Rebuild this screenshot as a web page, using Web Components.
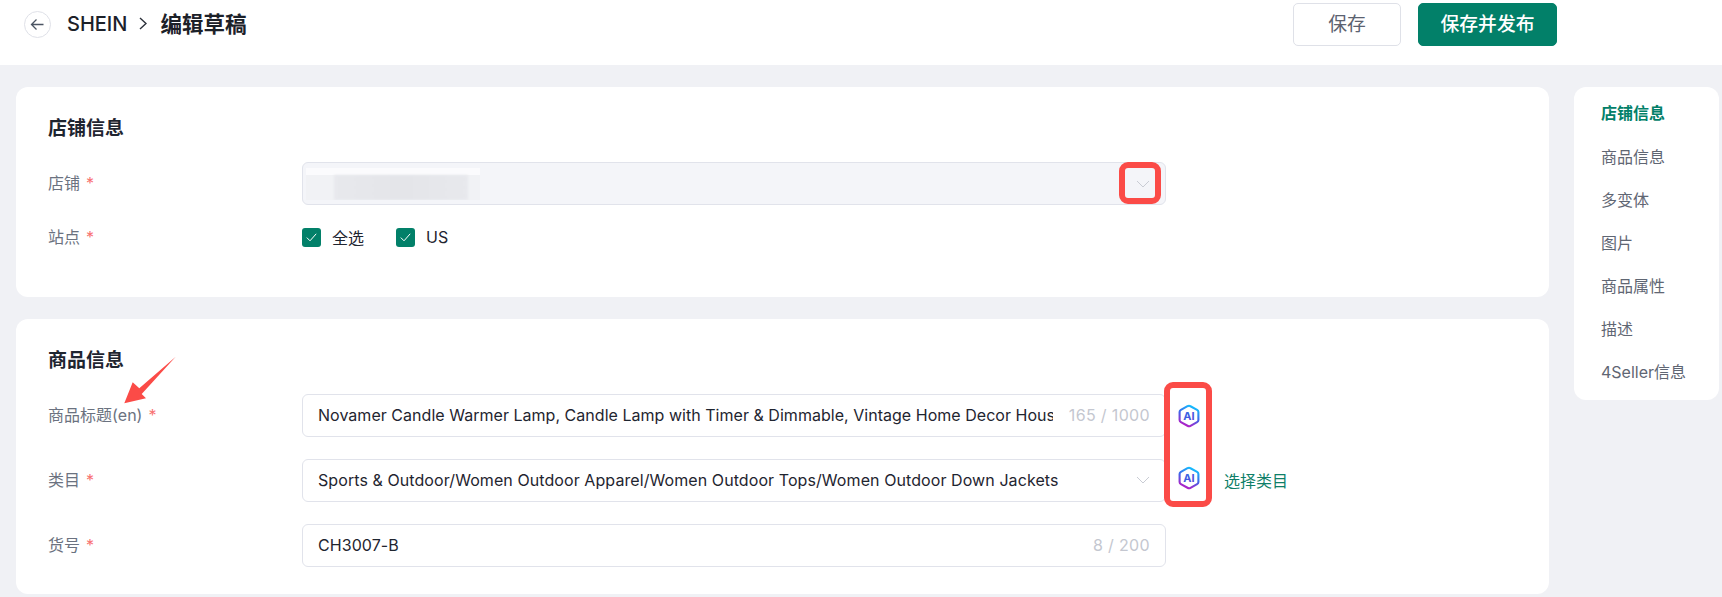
<!DOCTYPE html>
<html lang="zh">
<head>
<meta charset="utf-8">
<title>SHEIN 编辑草稿</title>
<style>
    html, body {
        margin: 0;
        height: 597px;
        overflow: hidden;
        background: #f0f1f5;
        font-family: Inter, "Noto Sans CJK SC", sans-serif;
        font-size: 16px;
        color: #1f2530;
    }
</style>
</head>
<body>

<app-page>
    <top-bar slot="top">
        <span slot="brand">SHEIN</span>
        <span slot="title">编辑草稿</span>
        <app-button slot="actions">保存</app-button>
        <app-button slot="actions" primary>保存并发布</app-button>
    </top-bar>

    <form-card heading="店铺信息">
        <form-row label="店铺">
            <text-field disabled chevron><blur-block></blur-block></text-field>
        </form-row>
        <form-row label="站点" compact>
            <check-box>全选</check-box>
            <check-box>US</check-box>
        </form-row>
    </form-card>

    <form-card heading="商品信息">
        <form-row label="商品标题(en)">
            <text-field counter="165 / 1000" style="letter-spacing:.03px">Novamer Candle Warmer Lamp, Candle Lamp with Timer &amp; Dimmable, Vintage Home Decor Hous</text-field>
            <ai-badge slot="extra"></ai-badge>
        </form-row>
        <form-row label="类目">
            <text-field chevron>Sports &amp; Outdoor/Women Outdoor Apparel/Women Outdoor Tops/Women Outdoor Down Jackets</text-field>
            <ai-badge slot="extra" style="margin-top:-5px"></ai-badge>
            <a slot="extra" style="color:#0f7f69;text-decoration:none;margin:-2px 0 0 24px">选择类目</a>
        </form-row>
        <form-row label="货号">
            <text-field counter="8 / 200">CH3007-B</text-field>
        </form-row>
    </form-card>

    <side-nav slot="side">
        <nav-item active>店铺信息</nav-item>
        <nav-item>商品信息</nav-item>
        <nav-item>多变体</nav-item>
        <nav-item>图片</nav-item>
        <nav-item>商品属性</nav-item>
        <nav-item>描述</nav-item>
        <nav-item>4Seller信息</nav-item>
    </side-nav>

    <!-- annotations drawn over the screenshot -->
    <mark-box slot="over" style="left:1119px;top:162px;width:42px;height:42px"></mark-box>
    <mark-box slot="over" style="left:1164px;top:382px;width:48px;height:125px"></mark-box>
    <mark-arrow slot="over" style="left:120px;top:352px"></mark-arrow>
</app-page>

<script>
function define(name, html, setup) {
    const template = document.createElement('template')
    template.innerHTML = html
    customElements.define(name, class extends HTMLElement {
        connectedCallback() {
            const shadow = this.attachShadow({ mode: "open" })
            shadow.appendChild(template.content.cloneNode(true))
            if (setup) setup(this, shadow)
        }
    })
}

const CHEVRON = `<svg width="14" height="8" viewBox="0 0 14 8" fill="none" stroke="#c9ccd4" stroke-width="1"><path d="M1 1l6 6 6-6"/></svg>`

define('app-page', `
    <style>
        :host { display: block; position: relative; width: 1722px; height: 597px; overflow: hidden; }
        main { display: flex; align-items: flex-start; gap: 25px; padding: 22px 3px 0 16px; }
        .cards { display: flex; flex-direction: column; gap: 22px; flex: 1; min-width: 0; }
    </style>
    <slot name="top"></slot>
    <main>
        <div class="cards"><slot></slot></div>
        <slot name="side"></slot>
    </main>
    <slot name="over"></slot>
`)

define('top-bar', `
    <style>
        :host {
            display: flex;
            align-items: center;
            box-sizing: border-box;
            height: 65px;
            padding: 0 165px 16px 24px;
            background: #fff;
        }
        .back {
            box-sizing: border-box;
            width: 27px;
            height: 27px;
            border: 1px solid #dfe1e8;
            border-radius: 50%;
            display: flex;
            align-items: center;
            justify-content: center;
            margin-right: 16px;
        }
        .title { display: flex; align-items: center; font-size: 20px; font-weight: 550; color: #1c2129; line-height: 28px; padding-bottom: 2px; }
        .title svg { margin: 0 13px 0 12px; }
        .title slot[name=title] { font-size: 21.5px; font-weight: 600; }
        .actions { margin-left: auto; display: flex; gap: 17px; }
    </style>
    <div class="back">
        <svg width="15" height="13" viewBox="0 0 15 13" fill="none" stroke="#4b5563" stroke-width="1.3"><path d="M13.5 6.5H1.5M6.5 1.5l-5 5 5 5"/></svg>
    </div>
    <div class="title">
        <slot name="brand"></slot>
        <svg width="8" height="13" viewBox="0 0 8 13" fill="none" stroke="#2b303a" stroke-width="1.4"><path d="M1 1l6 5.500-6 5.500"/></svg>
        <slot name="title"></slot>
    </div>
    <div class="actions"><slot name="actions"></slot></div>
`)

define('app-button', `
    <style>
        :host {
            display: flex;
            align-items: center;
            justify-content: center;
            box-sizing: border-box;
            height: 43px;
            width: 108px;
            border: 1px solid #dfe1e8;
            border-radius: 5px;
            background: #fff;
            color: #5b6270;
            font-size: 18.8px;
            line-height: 24px;
        }
        :host([primary]) {
            width: 139px;
            border-color: #028069;
            background: #028069;
            color: #fff;
            font-weight: 500;
        }
    </style>
    <slot></slot>
`)

define('form-card', `
    <style>
        :host {
            display: flex;
            flex-direction: column;
            gap: 22px;
            padding: 27px 32px 27px 32px;
            background: #fff;
            border-radius: 12px;
        }
        h2 { margin: 0; height: 26px; line-height: 29px; font-size: 19px; font-weight: 700; color: #1f2530; }
    </style>
    <h2></h2>
    <slot></slot>
`, (el, shadow) => {
    shadow.querySelector('h2').textContent = el.getAttribute('heading')
})

define('form-row', `
    <style>
        :host { display: flex; align-items: center; min-height: 43px; }
        :host([compact]) { min-height: 32px; margin: -6px 0 17px; }
        label { width: 254px; flex: none; color: #6b7280; white-space: nowrap; line-height: 22px; padding-bottom: 1px; }
        label span { color: #f87171; margin-left: 6px; }
        .field { width: 864px; flex: none; display: flex; gap: 32px; }
        .extra { display: flex; align-items: center; margin-left: 12px; }
    </style>
    <label><b style="font-weight:400"></b><span>*</span></label>
    <div class="field"><slot></slot></div>
    <div class="extra"><slot name="extra"></slot></div>
`, (el, shadow) => {
    shadow.querySelector('b').textContent = el.getAttribute('label')
})

define('text-field', `
    <style>
        :host {
            display: flex;
            align-items: center;
            box-sizing: border-box;
            width: 100%;
            height: 43px;
            padding: 0 15px 1px 15px;
            border: 1px solid #e1e3eb;
            border-radius: 6px;
            background: #fff;
            letter-spacing: .08px;
        }
        :host([disabled]) { background: #f4f5f9; padding: 0 15px 0 3px; }
        .text { flex: 1; min-width: 0; overflow: hidden; white-space: nowrap; }
        .counter { flex: none; margin-left: 16px; color: #c4c7d0; letter-spacing: .35px; }
        .chevron { flex: none; display: flex; margin-left: 16px; }
    </style>
    <div class="text"><slot></slot></div>
    <span class="counter"></span>
    <span class="chevron"></span>
`, (el, shadow) => {
    const counter = shadow.querySelector('.counter')
    if (el.hasAttribute('counter')) counter.textContent = el.getAttribute('counter')
    else counter.remove()
    const chevron = shadow.querySelector('.chevron')
    if (el.hasAttribute('chevron')) chevron.innerHTML = CHEVRON
    else chevron.remove()
})

// the store name is blurred out in the screenshot
define('blur-block', `
    <style>
        :host { display: block; width: 174px; height: 32px; background: #f1f2f5; }
        .top { height: 7px; background: #fbfbfd; }
        .mid { height: 25px; margin: 0 12px 0 28px; background: linear-gradient(90deg, #e8e9ed, #e4e5e9 50%, #e8e9ed); filter: blur(1px); }
    </style>
    <div class="top"></div>
    <div class="mid"></div>
`)

define('check-box', `
    <style>
        :host { display: inline-flex; align-items: center; gap: 11px; color: #1f2530; }
        .box {
            width: 19px;
            height: 19px;
            border-radius: 3px;
            background: #028069;
            display: flex;
            align-items: center;
            justify-content: center;
        }
    </style>
    <span class="box">
        <svg width="11" height="9" viewBox="0 0 11 9" fill="none" stroke="#fff" stroke-width="1"><path d="M.8 4.6l3.200 3.200 6.200-7"/></svg>
    </span>
    <slot></slot>
`)

define('ai-badge', `
    <style>
        :host { display: block; width: 22px; height: 24px; }
        svg { display: block; }
        text { font-family: Inter, sans-serif; font-size: 11px; font-weight: 700; }
    </style>
    <svg width="22" height="24" viewBox="0 0 22 24">
        <defs>
            <linearGradient id="ring" x1="0.7" y1="0" x2="0.3" y2="1">
                <stop offset="0" stop-color="#12c2ff"/>
                <stop offset="0.5" stop-color="#3f63e8"/>
                <stop offset="1" stop-color="#b81cc4"/>
            </linearGradient>
            <linearGradient id="letters" x1="0" y1="0" x2="1" y2="1">
                <stop offset="0" stop-color="#2a6fe6"/>
                <stop offset="1" stop-color="#5a3fd8"/>
            </linearGradient>
        </defs>
        <path d="M9.500 2.200Q11 1.400 12.500 2.200L19.100 5.900Q20.400 6.600 20.400 8.100V15.900Q20.400 17.400 19.100 18.100L12.500 21.800Q11 22.600 9.500 21.800L2.900 18.100Q1.600 17.400 1.600 15.900V8.100Q1.600 6.600 2.900 5.900z" fill="none" stroke="url(#ring)" stroke-width="2.100"/>
        <text x="11" y="16" text-anchor="middle" fill="url(#letters)">AI</text>
    </svg>
`)

define('side-nav', `
    <style>
        :host {
            display: flex;
            flex-direction: column;
            box-sizing: border-box;
            flex: none;
            width: 145px;
            height: 313px;
            padding: 6px 0 0 27px;
            background: #fff;
            border-radius: 12px;
        }
    </style>
    <slot></slot>
`)

define('nav-item', `
    <style>
        :host { display: block; height: 43px; line-height: 43px; color: #5f6673; white-space: nowrap; }
        :host([active]) { color: #028069; font-weight: 700; line-height: 41px; }
    </style>
    <slot></slot>
`)

define('mark-box', `
    <style>
        :host {
            position: absolute;
            box-sizing: border-box;
            border: 6px solid #fb4b47;
            border-radius: 9px;
        }
    </style>
`)

define('mark-arrow', `
    <style>
        :host { position: absolute; display: block; width: 60px; height: 55px; }
    </style>
    <svg width="60" height="55" viewBox="0 0 60 55">
        <path d="M55.700 4.700L19.300 36.300 12.700 30.300 4.300 51.300 26 46.300 21.700 42z" fill="#fb4b47"/>
    </svg>
`)
</script>
</body>
</html>
